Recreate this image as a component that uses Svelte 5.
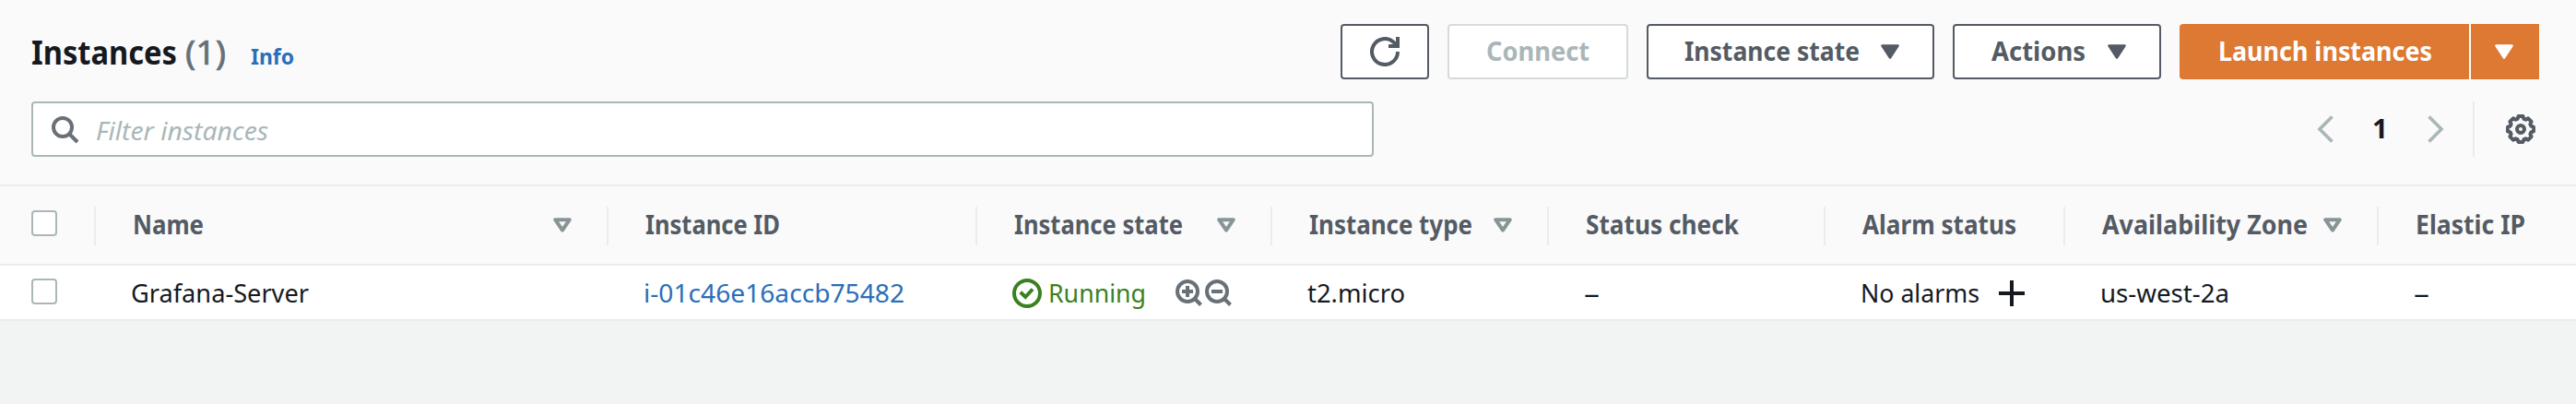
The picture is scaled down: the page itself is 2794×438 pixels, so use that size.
<script>
  const columns = [
    { label: 'Name', width: 556, w: 77, sort: true, cell: 'name', text: 'Grafana-Server', cw: 193 },
    { label: 'Instance ID', width: 400, w: 146, cell: 'link', text: 'i-01c46e16accb75482', cw: 283 },
    { label: 'Instance state', width: 320, w: 183, sort: true, cell: 'state', text: 'Running', cw: 106 },
    { label: 'Instance type', width: 300, w: 177, sort: true, cell: 'text', text: 't2.micro', cw: 106 },
    { label: 'Status check', width: 300, w: 166, cell: 'text', text: '–', cw: 17 },
    { label: 'Alarm status', width: 260, w: 167, cell: 'alarm', text: 'No alarms', cw: 129 },
    { label: 'Availability Zone', width: 340, w: 223, sort: true, cell: 'text', text: 'us-west-2a', cw: 140 },
    { label: 'Elastic IP', width: 216, w: 119, cell: 'text', text: '–', cw: 17 }
  ];

  // Outline of the eight-toothed settings gear, centred on 16,16.
  const polar = (deg, r) => {
    const a = (deg * Math.PI) / 180;
    return `${(16 + r * Math.cos(a)).toFixed(2)},${(16 + r * Math.sin(a)).toFixed(2)}`;
  };
  const gear = Array.from({ length: 8 }, (_, k) => k * 45)
    .flatMap((a) => [polar(a - 10, 14.2), polar(a + 10, 14.2), polar(a + 17, 11.7), polar(a + 28, 11.7)])
    .join(' ');
</script>

{#snippet fit(text, width)}
  <svg class="fit" {width} height="40"><text x="0" y="29" textLength={width} lengthAdjust="spacingAndGlyphs">{text}</text></svg>
{/snippet}

{#snippet caret()}
  <svg class="caret" width="20" height="16" viewBox="0 0 20 16"><path d="M1.500 1.500h17L10 14.500z" fill="currentColor" stroke="currentColor" stroke-width="2.600" stroke-linejoin="round" /></svg>
{/snippet}

<main>
  <header>
    <div class="title">
      <h1>{@render fit('Instances', 158)}<span>{@render fit('(1)', 44)}</span></h1>
      <a href="#info">{@render fit('Info', 47)}</a>
    </div>
    <div class="actions">
      <button class="refresh" aria-label="Refresh">
        <svg width="32" height="32" viewBox="0 0 32 32" fill="none" stroke="currentColor" stroke-width="4"><path d="M30 16a14 14 0 1 1-4.300-10.100L29 9.500" /><path d="M30 0v10H20" /></svg>
      </button>
      <button class="connect" disabled>{@render fit('Connect', 112)}</button>
      <button class="state">{@render fit('Instance state', 190)}{@render caret()}</button>
      <button class="act">{@render fit('Actions', 102)}{@render caret()}</button>
      <div class="launch">
        <button class="go">{@render fit('Launch instances', 232)}</button>
        <button class="more" aria-label="More launch options">{@render caret()}</button>
      </div>
    </div>
  </header>

  <section class="tools">
    <div class="search">
      <svg class="lens" width="32" height="32" viewBox="0 0 32 32" fill="none" stroke="currentColor" stroke-width="4"><circle cx="13" cy="13" r="10" /><path d="M20 20l9 9" /></svg>
      {@render fit('Filter instances', 187)}
    </div>
    <div class="pager">
      <svg class="arrow" width="20" height="32" viewBox="0 0 20 32" fill="none" stroke="currentColor" stroke-width="3.700"><path d="M16.500 2.500L3 16l13.500 13.500" /></svg>
      <b>{@render fit('1', 17)}</b>
      <svg class="arrow" width="20" height="32" viewBox="0 0 20 32" fill="none" stroke="currentColor" stroke-width="3.700"><path d="M3.500 2.500L17 16 3.500 29.500" /></svg>
      <div class="settings">
        <svg width="32" height="32" viewBox="0 0 32 32" fill="none" stroke="currentColor" stroke-width="4" stroke-linejoin="round"><polygon points={gear} /><circle cx="16" cy="16" r="4" /></svg>
      </div>
    </div>
  </section>

  <div class="row head">
    <div class="pick"><i></i></div>
    {#each columns as c}
      <div class="cell" style:width="{c.width}px">
        {@render fit(c.label, c.w)}
        {#if c.sort}<svg class="sort" width="20" height="16" viewBox="0 0 20 16"><path d="M2.200 2.200h15.600L10 13.500z" fill="none" stroke="currentColor" stroke-width="4" stroke-linejoin="round" /></svg>{/if}
      </div>
    {/each}
  </div>
  <div class="row data">
    <div class="pick"><i></i></div>
    {#each columns as c}
      <div class="cell {c.cell}" style:width="{c.width}px">
        {#if c.cell === 'state'}
          <svg class="ok" width="32" height="32" viewBox="0 0 32 32" fill="none" stroke="currentColor" stroke-width="4"><circle cx="16" cy="16" r="14" /><path d="M8.800 14.800L14.200 20 22 11.500" /></svg>
        {/if}
        {@render fit(c.text, c.cw)}
        {#if c.cell === 'state'}
          <span class="zooms">
            {#each [true, false] as plus}
              <svg width="32" height="32" viewBox="0 0 32 32" fill="none" stroke="currentColor" stroke-width="4"><circle cx="14" cy="14" r="11" /><path d="M21.500 21.500l7 7M8 14h12" />{#if plus}<path d="M14 8v12" />{/if}</svg>
            {/each}
          </span>
        {:else if c.cell === 'alarm'}
          <svg class="plus" width="28" height="28" viewBox="0 0 28 28" stroke="currentColor" stroke-width="4"><path d="M0 14h28M14 0v28" /></svg>
        {/if}
      </div>
    {/each}
  </div>
</main>

<style>
  :global(body) { margin: 0; background: #f2f4f3; }
  main { width: 2794px; height: 438px; overflow: hidden; background: #f2f4f3; font: 28px "Noto Sans", sans-serif; color: #16191f; }
  svg { display: block; flex: none; }
  .fit { overflow: visible; fill: currentColor; }
  header { height: 110px; box-sizing: border-box; padding: 26px 40px 0 34px; display: flex; justify-content: space-between; background: #fafafa; }
  .title { display: flex; }
  h1 { margin: 15px 0 0; display: flex; gap: 9px; font-size: 35.5px; font-weight: 700; height: 40px; }
  h1 span { color: #687078; font-weight: 400; }
  h1 span .fit, h1 span :global(text) { stroke: #687078; stroke-width: 0.7px; }
  .title a { color: #2a6fb8; font-size: 24px; font-weight: 700; margin: 15px 0 0 27px; }
  .actions { display: flex; gap: 20px; }
  button { font: 700 28px "Noto Sans", sans-serif; color: #545b64; background: #fff; border: 2px solid #545b64; border-radius: 4px; height: 60px; padding: 0; display: flex; align-items: center; box-sizing: border-box; }
  button .fit { margin-top: 2px; }
  .refresh { width: 96px; justify-content: center; }
  .connect { width: 196px; color: #aab7b8; border-color: #d5dbdb; padding-left: 40px; }
  .state { width: 312px; padding-left: 39px; gap: 23px; }
  .act { width: 226px; padding-left: 40px; gap: 24px; }
  .launch { display: flex; }
  .launch button { background: #dd7932; color: #fff; border: 0; }
  .launch .go { width: 314px; padding-left: 42px; border-radius: 4px 0 0 4px; }
  .launch .more { width: 76px; padding-left: 26px; border-left: 2px solid #fff; border-radius: 0; }
  .tools { height: 90px; padding: 0 40px 0 34px; box-sizing: border-box; display: flex; justify-content: space-between; background: #fafafa; }
  .search { width: 1456px; height: 60px; box-sizing: border-box; border: 2px solid #aab7b8; border-radius: 4px; background: #fff; display: flex; align-items: center; padding-left: 19px; gap: 17px; color: #687078; }
  .search .lens { margin-top: 2px; }
  .search .fit { color: #aab7b8; font-style: italic; margin-top: 6px; }
  .pager { display: flex; align-items: center; height: 60px; }
  .arrow { color: #aab7b8; }
  .pager b { margin: 2px 41px 0 40px; }
  .settings { height: 60px; margin-left: 31px; padding-left: 34px; padding-right: 4px; border-left: 2px solid #eaeded; display: flex; align-items: center; color: #545b64; }
  .row { display: flex; box-sizing: border-box; border-bottom: 2px solid #eaeded; }
  .head { height: 88px; border-top: 2px solid #eaeded; background: #fafafa; font-weight: 700; color: #545b64; }
  .data { height: 60px; background: #fff; }
  .pick { width: 102px; flex: none; padding-left: 34px; box-sizing: border-box; }
  .pick i { display: block; width: 28px; height: 28px; box-sizing: border-box; border: 2px solid #aab7b8; border-radius: 4px; background: #fff; }
  .head .pick { padding-top: 26px; }
  .data .pick { padding-top: 14px; }
  .cell { flex: none; box-sizing: border-box; display: flex; align-items: center; }
  .head .cell { height: 42px; margin-top: 22px; padding: 0 38px 0 40px; border-left: 2px solid #eaeded; justify-content: space-between; }
  .sort { color: #879596; margin-top: -2px; }
  .data .cell { padding-left: 40px; }
  .data .fit { margin-top: 4px; }
  .data .link { color: #2a6fb8; }
  .data .state { color: #3a8021; gap: 7px; }
  .ok, .zooms, .plus { margin-top: 2px; }
  .zooms { display: flex; margin-left: 24px; color: #687078; }
  .plus { margin-left: 21px; }
</style>
